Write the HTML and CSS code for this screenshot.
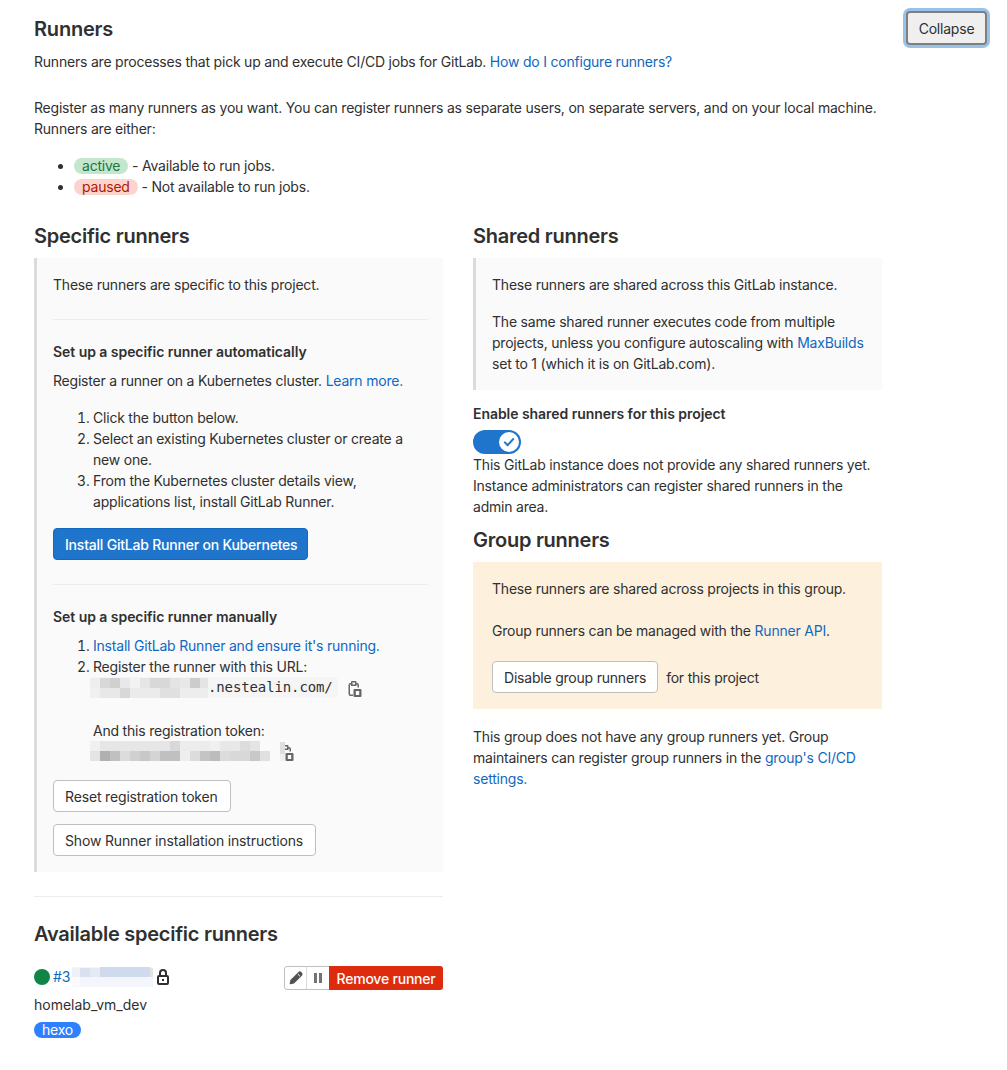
FILE: index.html
```html
<!DOCTYPE html>
<html lang="en">
<head>
    <meta charset="UTF-8">
    <meta name="viewport" content="width=device-width, initial-scale=1.0">
    <title>Runners</title>
    <link rel="stylesheet" href="styles.css">
</head>
<body>
    <section class="settings">
        <div class="settings-header">
            <div class="settings-intro">
                <h4 class="settings-title">Runners</h4>
                <p>Runners are processes that pick up and execute CI/CD jobs for GitLab. <a href="#">How do I configure runners?</a></p>
            </div>
            <button class="btn-collapse">Collapse</button>
        </div>

        <div class="settings-content">
            <p class="register-text">Register as many runners as you want. You can register runners as separate users, on separate servers, and on your local machine.<br>Runners are either:</p>
            <ul class="state-list">
                <li><span class="pill pill-green">active</span> - Available to run jobs.</li>
                <li><span class="pill pill-red">paused</span> - Not available to run jobs.</li>
            </ul>

            <div class="columns">
                <div class="column">
                    <h4 class="section-title">Specific runners</h4>
                    <div class="well">
                        <p>These runners are specific to this project.</p>
                        <hr>
                        <h5 class="sub-title">Set up a specific runner automatically</h5>
                        <p>Register a runner on a Kubernetes cluster. <a href="#">Learn more.</a></p>
                        <ol class="steps">
                            <li>Click the button below.</li>
                            <li>Select an existing Kubernetes cluster or create a new one.</li>
                            <li>From the Kubernetes cluster details view, applications list, install GitLab Runner.</li>
                        </ol>
                        <button class="btn btn-primary">Install GitLab Runner on Kubernetes</button>
                        <hr>
                        <h5 class="sub-title">Set up a specific runner manually</h5>
                        <ol class="steps steps-manual">
                            <li><a href="#">Install GitLab Runner and ensure it's running.</a></li>
                            <li>
                                Register the runner with this URL:
                                <div class="copy-row">
                                    <code class="code-chip">
                                        <svg class="blur" width="118" height="21" viewBox="0 0 118 21">
                                            <rect y="1" width="10" height="10" fill="#eeeeee"/>
                                            <rect x="10" y="1" width="10" height="10" fill="#d8d8d8"/>
                                            <rect x="20" y="1" width="10" height="10" fill="#d0d0d0"/>
                                            <rect x="30" y="1" width="10" height="10" fill="#e8e8e8"/>
                                            <rect x="40" y="1" width="10" height="10" fill="#f2f2f2"/>
                                            <rect x="50" y="1" width="10" height="10" fill="#e5e5e5"/>
                                            <rect x="60" y="1" width="20" height="10" fill="#d8d8d8"/>
                                            <rect x="80" y="1" width="10" height="10" fill="#e4e4e4"/>
                                            <rect x="90" y="1" width="10" height="10" fill="#e8e8e8"/>
                                            <rect x="100" y="1" width="10" height="10" fill="#cccccc"/>
                                            <rect x="110" y="1" width="8" height="10" fill="#e4e4e4"/>
                                            <rect y="11" width="10" height="10" fill="#f0f0f0"/>
                                            <rect x="10" y="11" width="20" height="10" fill="#e8e8e8"/>
                                            <rect x="30" y="11" width="10" height="10" fill="#d8d8d8"/>
                                            <rect x="40" y="11" width="30" height="10" fill="#ebebeb"/>
                                            <rect x="70" y="11" width="20" height="10" fill="#e0e0e0"/>
                                            <rect x="90" y="11" width="28" height="10" fill="#ededed"/>
                                        </svg><span>.nestealin.com/</span>
                                    </code>
                                    <svg class="copy-icon" width="14" height="16" viewBox="0 0 14 16"><path fill="#666" fill-rule="evenodd" d="M4 0h3.500a1 1 0 0 1 1 1v1h.5a2 2 0 0 1 2 2v2.500H9.500V4a.5.5 0 0 0-.5-.5h-.5V5H3V3.500h-.5A.5.5 0 0 0 2 4v9a.5.5 0 0 0 .5.5H5V15H2.500a2 2 0 0 1-2-2V4a2 2 0 0 1 2-2H3V1a1 1 0 0 1 1-1zm.5 1.500v2h2.500v-2H4.500zM6.500 8h6a1 1 0 0 1 1 1v6a1 1 0 0 1-1 1h-6a1 1 0 0 1-1-1V9a1 1 0 0 1 1-1zm1.300 2v4h3.400v-4H7.800z"/></svg>
                                </div>
                                <div class="token-label">And this registration token:</div>
                                <div class="copy-row">
                                    <svg class="blur" width="180" height="21" viewBox="0 0 180 21">
                                        <rect y="0" width="10" height="10" fill="#f0f0f0"/>
                                        <rect x="10" y="0" width="80" height="10" fill="#e6e6e6"/>
                                        <rect x="80" y="0" width="10" height="10" fill="#d8d8d8"/>
                                        <rect x="90" y="0" width="30" height="10" fill="#ececec"/>
                                        <rect x="120" y="0" width="10" height="10" fill="#f0f0f0"/>
                                        <rect x="130" y="0" width="20" height="10" fill="#e8e8e8"/>
                                        <rect x="150" y="0" width="10" height="10" fill="#dcdcdc"/>
                                        <rect x="160" y="0" width="10" height="10" fill="#e4e4e4"/>
                                        <rect y="10" width="10" height="10" fill="#e4e4e4"/>
                                        <rect x="10" y="10" width="10" height="10" fill="#b0b0b0"/>
                                        <rect x="20" y="10" width="10" height="10" fill="#c0c0c0"/>
                                        <rect x="30" y="10" width="10" height="10" fill="#dcdcdc"/>
                                        <rect x="40" y="10" width="10" height="10" fill="#d0d0d0"/>
                                        <rect x="50" y="10" width="10" height="10" fill="#c8c8c8"/>
                                        <rect x="60" y="10" width="10" height="10" fill="#d4d4d4"/>
                                        <rect x="70" y="10" width="20" height="10" fill="#c0c0c0"/>
                                        <rect x="90" y="10" width="10" height="10" fill="#eeeeee"/>
                                        <rect x="100" y="10" width="10" height="10" fill="#dcdcdc"/>
                                        <rect x="110" y="10" width="10" height="10" fill="#c4c4c4"/>
                                        <rect x="120" y="10" width="10" height="10" fill="#bcbcbc"/>
                                        <rect x="130" y="10" width="10" height="10" fill="#dcdcdc"/>
                                        <rect x="140" y="10" width="20" height="10" fill="#d8d8d8"/>
                                        <rect x="160" y="10" width="10" height="10" fill="#c8c8c8"/>
                                        <rect x="170" y="10" width="10" height="10" fill="#e0e0e0"/>
                                    </svg>
                                    <svg class="copy-icon copy-token" width="14" height="16" viewBox="0 0 14 16"><path fill="#666" fill-rule="evenodd" d="M4 0h3.500a1 1 0 0 1 1 1v1h.5a2 2 0 0 1 2 2v2.500H9.500V4a.5.5 0 0 0-.5-.5h-.5V5H3V3.500h-.5A.5.5 0 0 0 2 4v9a.5.5 0 0 0 .5.5H5V15H2.500a2 2 0 0 1-2-2V4a2 2 0 0 1 2-2H3V1a1 1 0 0 1 1-1zm.5 1.500v2h2.500v-2H4.500zM6.500 8h6a1 1 0 0 1 1 1v6a1 1 0 0 1-1 1h-6a1 1 0 0 1-1-1V9a1 1 0 0 1 1-1zm1.300 2v4h3.400v-4H7.800z"/><rect x="0" y="-3" width="5" height="12" fill="#dedede"/><rect x="0" y="9" width="5" height="7" fill="#efefef"/></svg>
                                </div>
                            </li>
                        </ol>
                        <div class="well-actions">
                            <button class="btn">Reset registration token</button>
                            <button class="btn">Show Runner installation instructions</button>
                        </div>
                    </div>
                    <hr class="hr-outer">
                    <h4 class="section-title available-title">Available specific runners</h4>
                    <div class="runner">
                        <div class="runner-info">
                            <div class="runner-line">
                                <span class="status-dot"></span>
                                <a href="#">#3</a>
                                <svg class="blur-id" width="81" height="20" viewBox="0 0 81 20">
                                    <rect width="81" height="20" fill="#f4f6fb"/>
                                    <rect x="0" y="1" width="8" height="9" fill="#eef1f8"/>
                                    <rect x="8" y="1" width="10" height="9" fill="#d9e1f0"/>
                                    <rect x="18" y="1" width="10" height="9" fill="#e4e9f4"/>
                                    <rect x="28" y="0" width="50" height="10" fill="#cfdaec"/>
                                    <rect x="78" y="1" width="3" height="9" fill="#e3e3e3"/>
                                    <rect x="0" y="10" width="8" height="9" fill="#fbfbfd"/>
                                </svg>
                                <svg class="lock-icon" width="12" height="16" viewBox="0 0 12 16">
                                    <path fill="none" stroke="#303030" stroke-width="2" d="M3 7V4a3 3 0 0 1 6 0v3"/>
                                    <rect x="1" y="7" width="10" height="8" rx="1" fill="none" stroke="#303030" stroke-width="2"/>
                                    <rect x="5" y="10" width="2" height="2" fill="#303030"/>
                                </svg>
                            </div>
                            <div class="runner-name">homelab_vm_dev</div>
                            <span class="pill pill-blue">hexo</span>
                        </div>
                        <div class="btn-group">
                            <button class="btn-icon"><svg width="16" height="16" viewBox="0 0 16 16"><path fill="#525252" stroke="#525252" stroke-width="1.600" stroke-linejoin="round" d="M2.500 13.500l.7-3.200 7.600-7.600a1.500 1.500 0 0 1 2.100 0l.4.4a1.500 1.500 0 0 1 0 2.100l-7.600 7.600z"/><path stroke="#fff" stroke-width="1" d="M9.700 4l2.300 2.300"/></svg></button>
                            <button class="btn-icon btn-pause"><svg width="16" height="16" viewBox="0 0 16 16"><path fill="#737373" d="M4 3h3v10H4zM9 3h3v10H9z"/></svg></button>
                            <button class="btn-remove">Remove runner</button>
                        </div>
                    </div>
                </div>

                <div class="column">
                    <h4 class="section-title">Shared runners</h4>
                    <div class="well well-shared">
                        <p>These runners are shared across this GitLab instance.</p>
                        <p>The same shared runner executes code from multiple projects, unless you configure autoscaling with <a href="#">MaxBuilds</a> set to 1 (which it is on GitLab.com).</p>
                    </div>
                    <div class="toggle-label">Enable shared runners for this project</div>
                    <div class="toggle">
                        <span class="toggle-knob">
                            <svg width="12" height="12" viewBox="0 0 16 16"><path fill="none" stroke="#1f75cb" stroke-width="2.800" stroke-linecap="round" stroke-linejoin="round" d="M2.500 8.500l3.700 3.700 7.300-8"/></svg>
                        </span>
                    </div>
                    <p class="shared-note">This GitLab instance does not provide any shared runners yet. Instance administrators can register shared runners in the admin area.</p>
                    <h4 class="section-title group-title">Group runners</h4>
                    <div class="well well-warning">
                        <p>These runners are shared across projects in this group.</p>
                        <p>Group runners can be managed with the <a href="#">Runner API</a>.</p>
                        <div class="group-action">
                            <button class="btn">Disable group runners</button>
                            <span>for this project</span>
                        </div>
                    </div>
                    <p class="group-note">This group does not have any group runners yet. Group maintainers can register group runners in the <a href="#">group's CI/CD settings.</a></p>
                </div>
            </div>
        </div>
    </section>
</body>
</html>
```

FILE: styles.css
```css
:root {
    --text: #303030;
    --link: #1068bf;
    --border: #dbdbdb;
}

* {
    box-sizing: border-box;
}

body {
    margin: 0;
    padding: 0 20px 0 34px;
    font-family: Inter, "Noto Sans", "Liberation Sans", sans-serif;
    font-size: 14px;
    line-height: 21px;
    letter-spacing: -0.21px;
    color: var(--text);
    background-color: #fff;
}

a {
    color: var(--link);
    text-decoration: none;
}

p {
    margin: 0 0 16px;
}

hr {
    border: 0;
    border-top: 1px solid #ececec;
    margin: 24px 0 21px;
}

.settings-header {
    display: flex;
    justify-content: space-between;
    align-items: flex-start;
    padding-top: 12px;
}

.settings-title {
    margin: 0 0 5px;
    font-size: 20px;
    line-height: 34px;
    font-weight: 600;
    letter-spacing: -0.2px;
}

.settings-intro p {
    margin: 0;
}

.btn-collapse {
    width: 81px;
    height: 34px;
    margin-top: -1px;
    font: inherit;
    letter-spacing: inherit;
    color: #303030;
    background-color: #efefef;
    border: 2px solid #7f7f7f;
    border-radius: 4px;
    box-shadow: 0 0 0 3px #97c3ea;
}

.settings-content {
    width: 848px;
    padding-top: 25px;
}

.register-text {
    margin-bottom: 16px;
}

.state-list {
    margin: 0 0 27px;
    padding-left: 40px;
}

.pill {
    display: inline-block;
    padding: 0 8px;
    font-size: 14px;
    line-height: 16px;
    border-radius: 8px;
}

.pill-green {
    color: #217645;
    background-color: #c3e6cd;
}

.pill-red {
    color: #ae1800;
    background-color: #fdd4cd;
}

.pill-blue {
    display: block;
    width: fit-content;
    color: #fff;
    background-color: #2f80ff;
}

.columns {
    display: grid;
    grid-template-columns: 409px 409px;
    column-gap: 30px;
}

.section-title {
    margin: 0 0 10px;
    font-size: 20px;
    line-height: 24px;
    font-weight: 600;
    letter-spacing: -0.25px;
}

.well {
    padding: 16px 15px 16px 16px;
    background-color: #fafafa;
    border-left: 3px solid #dbdbdb;
}

.sub-title {
    margin: 0 0 8px;
    font-size: 14px;
    line-height: 21px;
    font-weight: 600;
    letter-spacing: -0.05px;
}

.steps {
    margin: 0 0 16px;
    padding-left: 40px;
}

.steps-manual {
    margin-bottom: 18px;
}

.btn {
    display: block;
    height: 32px;
    padding: 0 11px;
    font: inherit;
    letter-spacing: inherit;
    color: var(--text);
    background-color: #fff;
    border: 1px solid #bfbfbf;
    border-radius: 4px;
}

.btn-primary {
    padding-right: 10px;
    color: #fff;
    background-color: #1f75cb;
    border-color: #1068bf;
    font-weight: 500;
}

.copy-row {
    display: flex;
    align-items: center;
    height: 21px;
    margin-left: -3px;
}

.code-chip {
    display: flex;
    align-items: center;
    height: 21px;
    padding-right: 5px;
    background-color: #f5f5f5;
    border-radius: 4px;
    font-family: "DejaVu Sans Mono", "Liberation Mono", monospace;
    font-size: 14px;
    letter-spacing: -0.12px;
}

.blur {
    display: block;
    flex: none;
}

.copy-icon {
    flex: none;
    margin: 2px 0 0 10px;
    overflow: visible;
}

.token-label {
    margin-top: 22px;
}

.well-actions {
    display: flex;
    flex-direction: column;
    align-items: flex-start;
    gap: 12px;
}

.well-actions .btn {
    padding-right: 12px;
    letter-spacing: -0.16px;
}

.hr-outer {
    margin: 24px 0 25px;
}

.available-title {
    margin-bottom: 20px;
}

.runner {
    display: flex;
    justify-content: space-between;
    align-items: flex-start;
}

.runner-line {
    display: flex;
    align-items: center;
    height: 21px;
}

.status-dot {
    width: 16px;
    height: 16px;
    margin-right: 3px;
    border-radius: 50%;
    background-color: #108548;
}

.blur-id {
    margin-left: 2px;
}

.lock-icon {
    margin-left: 4px;
}

.runner-name {
    margin-top: 7px;
    margin-bottom: 7px;
    letter-spacing: 0;
}

.btn-group {
    display: flex;
    height: 24px;
}

.btn-icon {
    display: flex;
    align-items: center;
    justify-content: center;
    width: 23px;
    padding: 0;
    background-color: #fff;
    border: 1px solid #bfbfbf;
    border-radius: 3px 0 0 3px;
}

.btn-pause {
    margin-left: -1px;
    border-left: 1px solid #dbdbdb;
    border-right: 0;
    border-radius: 0;
}

.btn-remove {
    width: 114px;
    padding: 0;
    font: inherit;
    font-weight: 500;
    letter-spacing: inherit;
    color: #fff;
    background-color: #dd2b0e;
    border: 0;
    border-radius: 0 3px 3px 0;
}

.well-shared p:last-child {
    margin-bottom: 0;
}

.toggle-label {
    margin-top: 13px;
    font-weight: 600;
    letter-spacing: -0.05px;
}

.toggle {
    display: flex;
    justify-content: flex-end;
    align-items: center;
    width: 48px;
    height: 24px;
    margin-top: 6px;
    padding-right: 2px;
    background-color: #1f75cb;
    border-radius: 12px;
}

.toggle-knob {
    display: flex;
    align-items: center;
    justify-content: center;
    width: 20px;
    height: 20px;
    border-radius: 50%;
    background-color: #fff;
}

.shared-note {
    margin: 0;
}

.group-title {
    margin-top: 11px;
}

.well-warning {
    padding: 16px 15px 16px 19px;
    background-color: #fdf1dd;
    border-left: 0;
}

.well-warning p:nth-child(2) {
    margin-top: 21px;
}

.group-action {
    display: flex;
    align-items: center;
    gap: 8px;
    margin-top: 20px;
}

.group-note {
    margin: 17px 0 0;
}
```
